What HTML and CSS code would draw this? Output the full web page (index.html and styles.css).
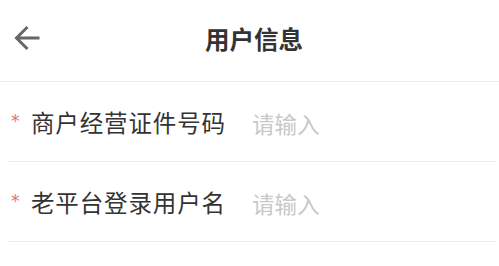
FILE: index.html
```html
<!DOCTYPE html>
<html lang="zh-CN">
<head>
<meta charset="utf-8">
<title>用户信息</title>
<link rel="stylesheet" href="styles.css">
</head>
<body>
<div class="page">
  <header class="nav">
    <span class="back">
      <svg width="28" height="26" viewBox="0 0 28 26" aria-hidden="true">
        <path d="M2.5 13H25.5M13.5 2L2.5 13L13.5 24" fill="none" stroke="#666" stroke-width="3"/>
      </svg>
    </span>
    <h1 class="title">用户信息</h1>
  </header>
  <div class="form">
    <div class="row">
      <span class="req">*</span>
      <span class="label">商户经营证件号码</span>
      <span class="input">请输入</span>
    </div>
    <div class="row">
      <span class="req">*</span>
      <span class="label">老平台登录用户名</span>
      <span class="input">请输入</span>
    </div>
  </div>
</div>
</body>
</html>
```
FILE: styles.css
```css
html, body {
  margin: 0;
  padding: 0;
  background: #fff;
}
body {
  font-family: "Noto Sans CJK SC", "Noto Sans", sans-serif;
  color: #333;
}
.page {
  width: 499px;
}
.nav {
  position: relative;
  height: 81px;
  border-bottom: 1px solid #ececec;
  display: flex;
  align-items: center;
  justify-content: center;
  padding-left: 9px;
}
.back {
  position: absolute;
  left: 14px;
  top: 25px;
  width: 28px;
  height: 26px;
  display: block;
}
.back svg {
  display: block;
}
.title {
  margin: 0;
  font-size: 24.5px;
  font-weight: 700;
  color: #333;
  line-height: 1;
  padding-bottom: 2px;
}
.form {
  padding-left: 8px;
  padding-right: 2px;
}
.row {
  height: 80px;
  box-sizing: border-box;
  border-bottom: 1px solid #ececec;
  display: flex;
  align-items: center;
  padding-top: 3px;
}
.req {
  width: 23px;
  padding-left: 3px;
  box-sizing: border-box;
  color: #e0707c;
  font-family: "DejaVu Sans", sans-serif;
  font-size: 17px;
  line-height: 1;
  margin-top: -3px;
}
.label {
  width: 194px;
  font-size: 23.5px;
  line-height: 1;
  color: #333;
  text-align: justify;
  text-align-last: justify;
}
.input {
  margin-left: 27px;
  font-size: 22.5px;
  line-height: 1;
  color: #c8c8c8;
}
```
